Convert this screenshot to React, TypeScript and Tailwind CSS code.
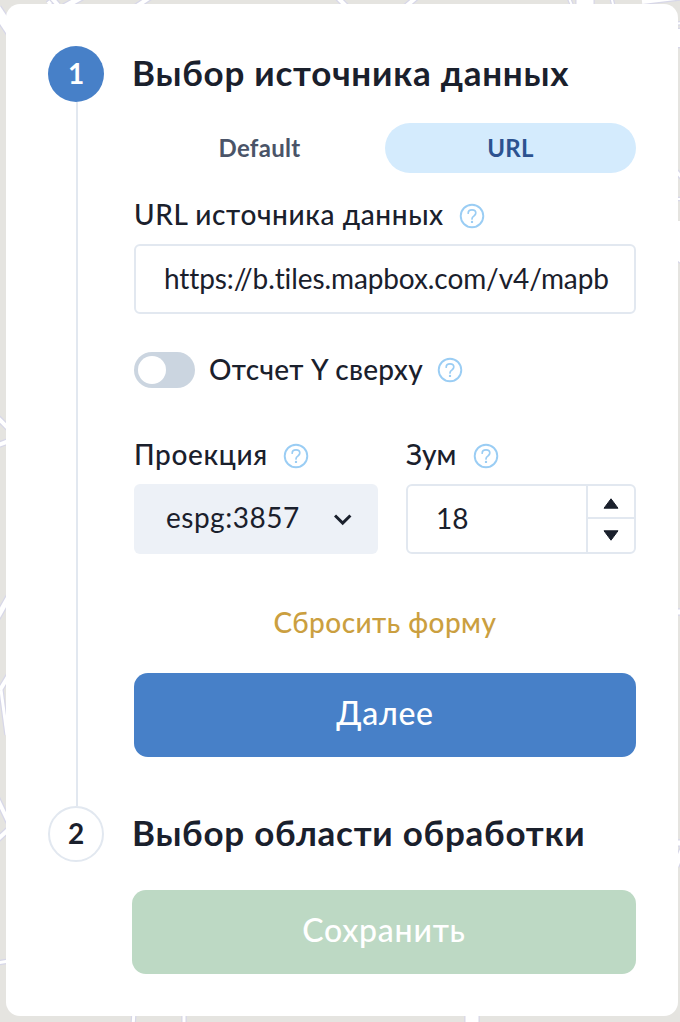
import { useState } from "react";

const roads: { d: string; w: number }[] = [
  { d: "M-4 9 L14 36", w: 10 },
  { d: "M48 4 L60 -6", w: 4 },
  { d: "M50 -4 L58 5", w: 4 },
  { d: "M62 8 L82 -3", w: 5 },
  { d: "M134 8 L152 -4", w: 4 },
  { d: "M336 -4 L346 6", w: 4 },
  { d: "M404 8 L418 -4", w: 4 },
  { d: "M568 -4 L573 8", w: 2 },
  { d: "M585 -4 V8", w: 17 },
  { d: "M611 -4 L614 8", w: 2 },
  { d: "M642 2 L684 -3", w: 4 },
  { d: "M672 24 L684 23", w: 2 },
  { d: "M676 38 H684", w: 18 },
  { d: "M676 171 L684 180", w: 3 },
  { d: "M676 199 H684", w: 2 },
  { d: "M674 221 V250 L684 258", w: 12 },
  { d: "M674 612 H684", w: 5 },
  { d: "M674 843 H684", w: 5 },
  { d: "M684 846 L676 866", w: 5 },
  { d: "M-2 418 L9 429", w: 4 },
  { d: "M-2 445 L9 441", w: 4 },
  { d: "M-3 618 L10 595", w: 5 },
  { d: "M-3 695 L9 675", w: 4 },
  { d: "M1 690 L7 735", w: 3 },
  { d: "M-3 798 L9 823", w: 4 },
  { d: "M-3 840 L9 829", w: 4 },
  { d: "M-3 963 L9 961", w: 3 },
  { d: "M134 1012 L133 1026", w: 3 },
  { d: "M184 1012 V1026", w: 3 },
  { d: "M472 1012 V1026", w: 13 },
];

function MapBackdrop() {
  return (
    <svg className="absolute inset-0 h-full w-full" viewBox="0 0 680 1022" fill="none">
      {roads.map((r) => (
        <g key={r.d}>
          <path d={r.d} stroke="#d7d7e8" strokeWidth={r.w + 2.5} />
          <path d={r.d} stroke="#fff" strokeWidth={r.w} />
        </g>
      ))}
    </svg>
  );
}

function Help() {
  return (
    <svg className="h-[26px] w-[26px] shrink-0" viewBox="0 0 26 26" fill="none" stroke="#9acdf4">
      <circle cx="13" cy="13" r="11.3" strokeWidth="1.9" />
      <path d="M9.2 10.200C9.200 8 10.800 6.900 13 6.900s3.800 1.300 3.800 3.200c0 1.600-.9 2.200-2 3-1.200.8-1.800 1.300-1.800 2.800" strokeWidth="1.7" strokeLinecap="round" />
      <circle cx="13" cy="18.900" r="1.200" fill="#9acdf4" stroke="none" />
    </svg>
  );
}

export default function App() {
  const [tab, setTab] = useState("URL");
  const [zoom, setZoom] = useState(18);
  const [flipY, setFlipY] = useState(false);
  const tabOn = "bg-[#d4ebfd] text-[#2c5290]";
  const tabOff = "text-[#4a5468]";

  return (
    <main className="relative h-[1022px] w-[680px] overflow-hidden bg-[#e5e4e0] pt-1 pl-1.5 font-['Lato','Noto_Sans',sans-serif] text-[#1a202c]">
      <MapBackdrop />
      <section className="relative h-[1012px] w-[672px] rounded-[14px] bg-white px-[42px] pt-[42px] whitespace-nowrap">
        <div className="flex h-[760px]">
          <div className="flex w-14 shrink-0 flex-col items-center">
            <div className="flex h-14 w-14 items-center justify-center rounded-full bg-[#4780c8] pb-0.5 text-[28px] font-bold text-white">1</div>
            <div className="ml-0.5 w-0.5 flex-1 bg-[#e2e8f0]" />
          </div>
          <div className="ml-[30px] flex w-[502px] flex-col">
            <h2 className="-ml-0.5 flex h-14 items-center pb-1 text-[35px] font-bold tracking-[0.75px]">
              <span>Выбор источника данных</span>
            </h2>
            <div className="mt-[21px] flex h-[50px] text-[24px] font-bold tracking-[0.3px]">
              {["Default", "URL"].map((t) => (
                <button key={t} onClick={() => setTab(t)} className={`flex flex-1 items-center justify-center rounded-full pb-px ${tab === t ? tabOn : tabOff}`}>
                  {t}
                </button>
              ))}
            </div>
            <label className="mt-[25px] flex h-9 items-center text-[28px] font-medium">
              <span className="w-[325px] pb-1 tracking-[0.6px]">URL источника данных</span>
              <Help />
            </label>
            <div className="mt-[10px] flex h-[70px] items-center overflow-hidden rounded-md border-2 border-[#e2e8f0] px-7 pb-0.5 text-[28px]">
              <span className="tracking-[-0.1px]">https://b.tiles.mapbox.com/v4/mapb</span>
            </div>
            <div className="mt-[38px] flex h-9 items-center text-[28px] font-medium">
              <button aria-label="Отсчет Y сверху" onClick={() => setFlipY(!flipY)} className={`flex h-9 w-[61px] items-center rounded-full bg-[#cbd5e0] px-1 ${flipY ? "justify-end" : ""}`}>
                <span className="h-7 w-7 rounded-full bg-white" />
              </button>
              <span className="ml-[14px] w-[228px] pb-0.5 tracking-[0.3px]">Отсчет Y сверху</span>
              <Help />
            </div>
            <div className="mt-[50px] flex gap-7">
              <div className="w-[244px]">
                <div className="flex h-9 items-center text-[28px] font-medium">
                  <span className="w-[149px] pb-1 tracking-[0.65px]">Проекция</span>
                  <Help />
                </div>
                <div className="mt-[10px] flex h-[70px] items-center rounded-md bg-[#edf1f7] pl-8 text-[28px]">
                  <span className="w-[168px] pb-1 tracking-[0.5px]">espg:3857</span>
                  <svg className="h-4 w-[18px]" viewBox="0 0 18 16" fill="none" stroke="#1a202c" strokeWidth="3">
                    <path d="M1 4.500 L8.700 12.100 L16.400 4.500" />
                  </svg>
                </div>
              </div>
              <div className="w-[230px]">
                <div className="flex h-9 items-center text-[28px] font-medium">
                  <span className="w-[67px] pb-1">Зум</span>
                  <Help />
                </div>
                <div className="mt-[10px] flex h-[70px] rounded-md border-2 border-[#e2e8f0] text-[28px]">
                  <div className="flex flex-1 items-center pb-0.5 pl-7"><span>{zoom}</span></div>
                  <div className="flex w-12 flex-col border-l-2 border-[#e2e8f0]">
                    <button aria-label="+" onClick={() => setZoom(zoom + 1)} className="flex h-[33px] items-center justify-center border-b-2 border-[#e2e8f0]">
                      <svg className="mt-[3px] h-[11px] w-4" viewBox="0 0 16 11"><path d="M8 .8 L15 10.200 H1 Z" fill="#1a202c" stroke="#1a202c" strokeLinejoin="round" /></svg>
                    </button>
                    <button aria-label="-" onClick={() => setZoom(zoom - 1)} className="flex flex-1 items-center justify-center">
                      <svg className="mb-px h-[11px] w-4" viewBox="0 0 16 11"><path d="M8 10.200 L1 .8 H15 Z" fill="#1a202c" stroke="#1a202c" strokeLinejoin="round" /></svg>
                    </button>
                  </div>
                </div>
              </div>
            </div>
            <button className="mt-[50px] flex h-10 items-center justify-center pb-1 text-[28px] font-medium tracking-[0.45px] text-[#cb9f40]">
              <span>Сбросить форму</span>
            </button>
            <button className="mt-[29px] flex h-[84px] items-center justify-center rounded-[14px] bg-[#4780c8] pb-1 text-[32px] font-medium tracking-[0.7px] text-white">
              <span>Далее</span>
            </button>
          </div>
        </div>
        <div className="flex h-14 items-center">
          <div className="flex h-14 w-14 items-center justify-center rounded-full border-2 border-[#e2e8f0] pb-0.5 text-[28px] font-bold">2</div>
          <h2 className="ml-7 pb-1 text-[35px] font-bold tracking-[0.72px]">Выбор области обработки</h2>
        </div>
        <button className="mt-7 ml-[84px] flex h-[84px] w-[504px] items-center justify-center rounded-[14px] bg-[#bdd9c4] pb-1 text-[32px] font-medium tracking-[0.75px] text-white">
          <span>Сохранить</span>
        </button>
      </section>
    </main>
  );
}
